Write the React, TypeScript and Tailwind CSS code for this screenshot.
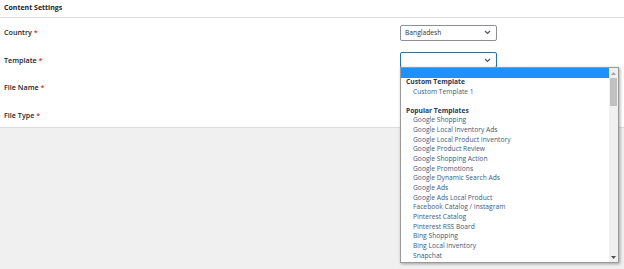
import React from "react";

const items = [
  "Google Shopping",
  "Google Local Inventory Ads",
  "Google Local Product Inventory",
  "Google Product Review",
  "Google Shopping Action",
  "Google Promotions",
  "Google Dynamic Search Ads",
  "Google Ads",
  "Google Ads Local Product",
  "Facebook Catalog / Instagram",
  "Pinterest Catalog",
  "Pinterest RSS Board",
  "Bing Shopping",
  "Bing Local Inventory",
  "Snapchat",
];

function Chevron() {
  return (
    <svg width="7" height="5" viewBox="0 0 7 5" className="shrink-0">
      <path d="M1 1 L3.5 3.5 L6 1" fill="none" stroke="#50575e" strokeWidth="1.2" />
    </svg>
  );
}

function Label({ text }: { text: string }) {
  return (
    <div className="text-[7.2px] font-semibold text-[#1d2327]">
      {text} <span className="text-[#d63638]">*</span>
    </div>
  );
}

export default function App() {
  return (
    <div
      className="relative w-[624px] h-[269px] bg-[#f0f0f1] overflow-hidden"
      style={{ fontFamily: '"Open Sans", "Noto Sans", sans-serif' }}
    >
      <div className="bg-white border-b border-[#dcdcde] h-[128px]">
        <div className="h-[18px] flex items-center px-[4px] border-b border-[#dcdcde] text-[7px] font-bold text-[#1d2327]">
          Content Settings
        </div>
        <div className="flex flex-col pt-[1px]">
          <div className="h-[27.5px] flex items-center pl-[4px]">
            <div className="w-[396px]">
              <Label text="Country" />
            </div>
            <div className="w-[97px] h-[16px] border border-[#8c8f94] rounded-[2px] flex items-center justify-between pl-[4px] pr-[5px] text-[6.7px] text-[#2c3338]">
              <span>Bangladesh</span>
              <Chevron />
            </div>
          </div>
          <div className="h-[27.5px] flex items-center pl-[4px]">
            <div className="w-[396px]">
              <Label text="Template" />
            </div>
            <div className="w-[97px] h-[16px] border border-[#2271b1] rounded-[2px] flex items-center justify-end pr-[5px]">
              <Chevron />
            </div>
          </div>
          <div className="h-[27.5px] flex items-center pl-[4px]">
            <Label text="File Name" />
          </div>
          <div className="h-[27.5px] flex items-center pl-[4px]">
            <Label text="File Type" />
          </div>
        </div>
      </div>

      <div className="absolute left-[400px] top-[67px] w-[219px] h-[196px] bg-white border border-[#9a9a9a] shadow-[1px_1px_3px_rgba(0,0,0,0.35)] flex">
        <div className="flex-1 flex flex-col text-[6.7px]">
          <div className="h-[9.67px] bg-[#1e90ff]" />
          <div className="h-[9.67px] flex items-center pl-[5px] font-bold text-[#1d3a5c]">Custom Template</div>
          <div className="h-[9.67px] flex items-center pl-[12px] text-[#3c5a7d]">Custom Template 1</div>
          <div className="h-[9px]" />
          <div className="h-[9.67px] flex items-center pl-[5px] font-bold text-[#1d3a5c]">Popular Templates</div>
          {items.map((t) => (
            <div key={t} className="h-[9.67px] flex items-center pl-[12px] text-[#3c5a7d]">
              {t}
            </div>
          ))}
        </div>
        <div className="w-[9px] bg-[#f0f0f0] flex flex-col items-center">
          <div className="h-[10px] flex items-center justify-center">
            <svg width="5" height="3" viewBox="0 0 5 3">
              <path d="M0 3 L2.5 0 L5 3 Z" fill="#a3a3a3" />
            </svg>
          </div>
          <div className="w-[7px] h-[28px] bg-[#c1c1c1]" />
          <div className="flex-1" />
          <div className="h-[10px] flex items-center justify-center">
            <svg width="5" height="3" viewBox="0 0 5 3">
              <path d="M0 0 L2.5 3 L5 0 Z" fill="#505050" />
            </svg>
          </div>
        </div>
      </div>
    </div>
  );
}
